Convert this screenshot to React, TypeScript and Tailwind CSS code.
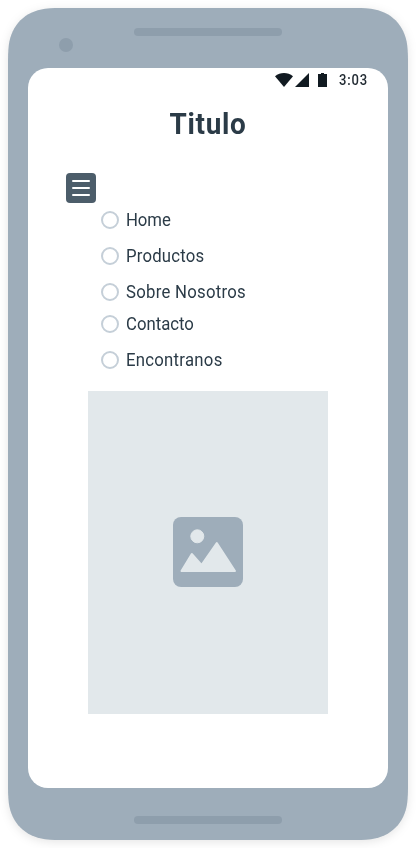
const items = [
  { label: "Home", row: "h-9", text: "tracking-[-0.1px]" },
  { label: "Productos", row: "h-9", text: "tracking-[0.2px]" },
  { label: "Sobre Nosotros", row: "h-8", text: "tracking-[0.28px]" },
  { label: "Contacto", row: "h-9", text: "tracking-[0px]" },
  { label: "Encontranos", row: "h-9", text: "tracking-[0.28px]" },
];

function StatusBar() {
  return (
    <div className="flex h-6 items-center pl-[247px] text-[#111a21]">
      <svg width="54" height="16" viewBox="0 0 54 16" fill="currentColor">
        <path d="M0 4.2C5.3-.1 12.7-.1 18 4.2L9 15Z" />
        <path d="M20 15 34 1V15Z" />
        <path d="M43 2h3V1h3v1h3v13h-9Z" />
      </svg>
      <span className="ml-[9.5px] origin-left scale-x-[0.93] text-sm leading-6 font-medium tracking-[0.9px] text-[#222b33]">3:03</span>
    </div>
  );
}

function ImagePlaceholder() {
  return (
    <div className="mx-auto mt-1 flex h-[323px] w-60 items-center justify-center bg-[#e2e8eb] pb-px">
      <svg width="70" height="70" viewBox="0 0 70 70">
        <rect width="70" height="70" rx="8" fill="#9eadba" />
        <g fill="#e2e8eb" stroke="#e2e8eb" strokeLinejoin="round">
          <circle cx="24.3" cy="19.3" r="6.5" />
          <path strokeWidth="2" d="M8.5 54 18.8 37 28.5 48 43.8 26 62 54Z" />
        </g>
      </svg>
    </div>
  );
}

export default function App() {
  return (
    <div className="h-[848px] w-[416px] overflow-hidden bg-white p-2 font-[Roboto,sans-serif] text-[#2b3b47]">
      <div className="drop-shadow-[0_2px_5px_rgba(0,0,0,0.1)]">
        <div className="h-[832px] w-[400px] bg-[#9eadba] px-5 [clip-path:path('M0_56C0_50_0_44_0.8_37C3.5_17_17_3.5_37_0.8C44_0_50_0_56_0H344C350_0_356_0_363_0.8C383_3.5_396.5_17_399.2_37C400_44_400_50_400_56V776C400_782_400_788_399.2_795C396.5_815_383_828.5_363_831.2C356_832_350_832_344_832H56C50_832_44_832_37_831.2C17_828.5_3.5_815_0.8_795C0_788_0_782_0_776Z')]">
          <div className="flex h-[60px] items-start">
            <div className="mt-[30px] ml-[31px] size-3.5 rounded-full bg-[#8e9eac]" />
            <div className="mt-5 ml-[61px] h-2 w-[148px] rounded-full bg-[#8e9eac]" />
          </div>
          <div className="h-[720px] rounded-[20px] bg-white">
            <StatusBar />
            <h1 className="mt-3 h-10 scale-x-[0.93] text-center text-[30px] leading-10 font-bold tracking-[0.7px]">Titulo</h1>
            <button className="mt-[29px] ml-[38px] flex size-[30px] flex-col items-center justify-center gap-[5px] rounded bg-[#4c5d6a]">
              <span className="h-0.5 w-[18px] rounded-full bg-white" />
              <span className="h-0.5 w-[18px] rounded-full bg-white" />
              <span className="h-0.5 w-[18px] rounded-full bg-white" />
            </button>
            <ul className="mt-2 ml-[73px]">
              {items.map((item) => (
                <li key={item.label} className={`flex items-start ${item.row}`}>
                  <span className="size-[18px] shrink-0 rounded-full border-2 border-[#c5cfd8]" />
                  <span className={`ml-[7px] origin-left scale-x-[0.93] text-lg leading-[18px] whitespace-nowrap ${item.text}`}>{item.label}</span>
                </li>
              ))}
            </ul>
            <ImagePlaceholder />
          </div>
          <div className="mx-auto mt-7 h-2 w-[148px] rounded-full bg-[#8e9eac]" />
        </div>
      </div>
    </div>
  );
}
